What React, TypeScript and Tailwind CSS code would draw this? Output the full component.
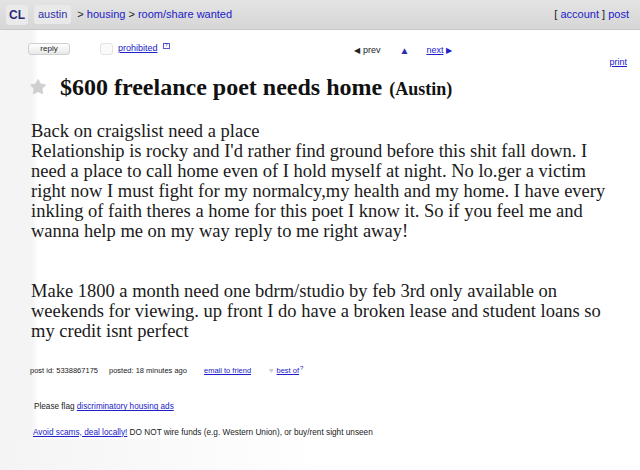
import { Star } from "lucide-react";

const sans = { fontFamily: '"Liberation Sans", Arial, sans-serif' };
const serif = { fontFamily: '"Liberation Serif", "Times New Roman", serif' };

const Header = () => (
  <div className="flex h-[30px] items-center justify-between border-b border-[#c8c8c8] bg-gradient-to-b from-[#e4e4e4] to-[#d6d6d6] px-[6px] text-[11px]">
    <div className="flex items-center gap-[6px]">
      <span className="rounded-[3px] bg-[#eaeaea] px-[3px] py-[1px] text-[12px] font-bold text-[#2a2a7a]">
        CL
      </span>
      <span className="rounded-[3px] bg-[#e9e9e9] px-[4px] py-[1px] text-[#3030a8]">
        austin
      </span>
      <span className="text-[#222]">
        &gt; <a className="text-[#2020c8]">housing</a> &gt;{" "}
        <a className="text-[#2020c8]">room/share wanted</a>
      </span>
    </div>
    <div className="pr-[5px] text-[#222]">
      [ <a className="text-[#2020c8]">account</a> ]{" "}
      <a className="text-[#2020c8]">post</a>
    </div>
  </div>
);

const Toolbar = () => (
  <div className="relative h-[30px] text-[9px]">
    <div className="absolute left-[28px] top-[13px] flex h-[12px] w-[42px] items-center justify-center rounded-[3px] border border-[#cfcfcf] bg-gradient-to-b from-white to-[#e8e8e8] text-[8px] text-[#222]">
      reply
    </div>
    <div className="absolute left-[100px] top-[12px] flex items-center gap-[5px]">
      <span className="h-[12px] w-[13px] rounded-[3px] border border-[#e2e2e2] bg-[#fafafa]" />
      <a className="text-[#2020c8] underline">prohibited</a>
      <span className="-mt-[6px] inline-flex h-[6px] w-[7px] items-center justify-center border border-[#5a5ad0] text-[5px] leading-none text-[#2020c8]">
        ?
      </span>
    </div>
    <div className="absolute left-[354px] top-[13px] flex items-center text-[9px] text-[#222]">
      <span className="mr-[3px] text-[8px]">◀</span>prev
      <span className="ml-[19px] text-[10px] text-[#2a2ab0]">▲</span>
      <a className="ml-[17px] text-[#2020c8] underline">next</a>
      <span className="ml-[3px] text-[8px] text-[#2020c8]">▶</span>
    </div>
    <a className="absolute right-[13px] top-[26px] text-[9px] text-[#2020c8] underline">
      print
    </a>
  </div>
);

export default function App() {
  return (
    <div
      className="h-[470px] w-[640px] overflow-hidden bg-gradient-to-r from-[#f4f4f4] via-white to-white"
      style={sans}
    >
      <Header />
      <div className="bg-gradient-to-r from-[#f4f4f4] from-[5%] via-white via-[6%] to-white">
        <Toolbar />
        <div
          className="flex items-baseline pl-[29px] pt-[9px] font-bold text-[#111]"
          style={serif}
        >
          <Star
            size={18}
            className="mr-[13px] self-center fill-[#cfcfcf] text-[#cfcfcf]"
            strokeWidth={1}
          />
          <span className="text-[24px]">$600 freelance poet needs home</span>
          <span className="ml-[7px] text-[18px]">(Austin)</span>
        </div>
        <div
          className="pl-[31px] pr-[30px] pt-[16px] text-[18.5px] leading-[20px] text-[#1a1a1a]"
          style={serif}
        >
          <p>
            Back on craigslist need a place
            <br />
            Relationship is rocky and I'd rather find ground before this shit
            fall down. I need a place to call home even of I hold myself at
            night. No lo.ger a victim right now I must fight for my normalcy,my
            health and my home. I have every inkling of faith theres a home for
            this poet I know it. So if you feel me and wanna help me on my way
            reply to me right away!
          </p>
          <p className="mt-[40px]">
            Make 1800 a month need one bdrm/studio by feb 3rd only available on
            weekends for viewing. up front I do have a broken lease and student
            loans so my credit isnt perfect
          </p>
        </div>
        <div className="flex items-center pl-[30px] pt-[24px] text-[7.5px] text-[#222]">
          <span>post id: 5338867175</span>
          <span className="ml-[11px]">posted: 18 minutes ago</span>
          <a className="ml-[17px] text-[#2020c8] underline">email to friend</a>
          <span className="ml-[18px] text-[#ccc]">♥</span>
          <a className="ml-[3px] text-[#2020c8] underline">best of</a>
          <span className="-mt-[5px] ml-[1px] text-[6px] text-[#2020c8]">?</span>
        </div>
        <div className="mt-[25px] pl-[34px] text-[8.2px] text-[#222]">
          Please flag{" "}
          <a className="text-[#2020c8] underline">discriminatory housing ads</a>
        </div>
        <div className="mt-[13px] pl-[33px] text-[8.25px] text-[#222]">
          <a className="text-[#2020c8] underline">Avoid scams, deal locally!</a>{" "}
          DO NOT wire funds (e.g. Western Union), or buy/rent sight unseen
        </div>
      </div>
    </div>
  );
}
